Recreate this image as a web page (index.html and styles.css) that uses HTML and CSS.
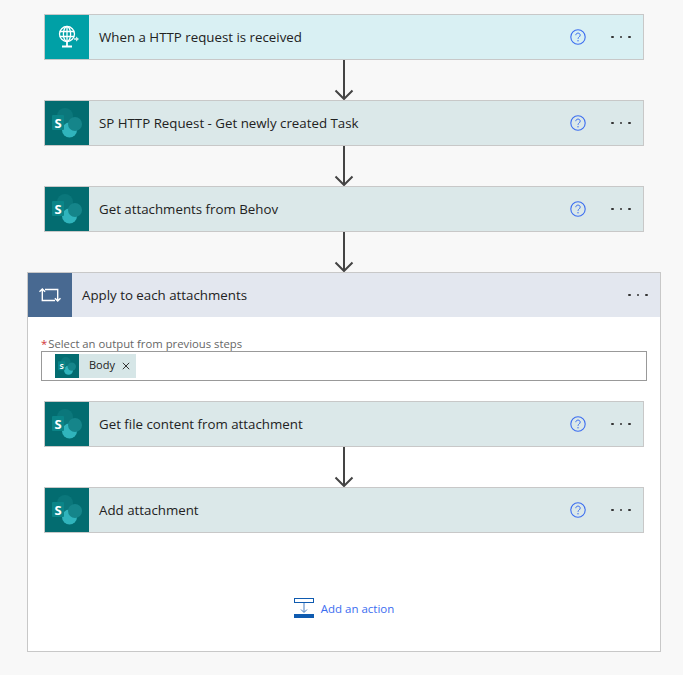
FILE: index.html
```html
<!DOCTYPE html>
<html lang="en">
<head>
  <meta charset="UTF-8">
  <title>Flow designer</title>
  <link rel="stylesheet" href="styles.css">
</head>
<body>
  <svg class="defs">
    <symbol id="sp" viewBox="0 0 30 30">
      <circle cx="13" cy="8" r="8" fill="#0b777b"/>
      <circle cx="17.500" cy="22" r="7.500" fill="#30b4bc"/>
      <circle cx="23" cy="16" r="7" fill="#15858a"/>
      <rect x="0" y="7" width="12" height="15" rx="1" fill="#0b8588"/>
      <text x="6" y="19.500" class="sp-letter">S</text>
    </symbol>
    <symbol id="help" viewBox="0 0 16 16">
      <circle cx="8" cy="8" r="7.200" fill="none" stroke="#3b6df0" stroke-width="1.100"/>
      <path d="M5.800 6.200c0-1.300 1-2.100 2.200-2.100s2.200.8 2.200 2c0 1.900-2.200 1.900-2.200 3.700" fill="none" stroke="#3b6df0" stroke-width="1"/>
      <circle cx="8" cy="11.700" r=".7" fill="#3b6df0"/>
    </symbol>
    <symbol id="down" viewBox="0 0 20 40">
      <path d="M10 0v39M1.500 30.500l8.500 8.500 8.500-8.500" fill="none" stroke="#444" stroke-width="2"/>
    </symbol>
  </svg>

  <main class="flow">
    <div class="card card-http">
      <div class="card-icon">
        <svg width="24" height="26" viewBox="0 0 24 26" fill="none" stroke="#fff" stroke-width="1.300">
          <circle cx="12" cy="10" r="7.500"/>
          <ellipse cx="12" cy="10" rx="3.600" ry="7.500"/>
          <path d="M4.800 7.500h14.400M4.800 12.500h14.400M12 2.500v15"/>
          <path d="M12 18v4M7 22.500h10" stroke-width="1.800"/>
          <path d="M19 15h2.500" stroke="#cfeced" stroke-width="1.600"/>
          <path d="M21 12.500l3 2.500-3 2.500z" fill="#cfeced" stroke="none"/>
        </svg>
      </div>
      <span class="card-title">When a HTTP request is received</span>
      <svg class="help"><use href="#help"/></svg>
      <span class="dots"><i></i><i></i><i></i></span>
    </div>

    <div class="arrow"><svg class="arrow-svg"><use href="#down"/></svg></div>

    <div class="card card-sp">
      <div class="card-icon"><svg class="sp-icon"><use href="#sp"/></svg></div>
      <span class="card-title">SP HTTP Request - Get newly created Task</span>
      <svg class="help"><use href="#help"/></svg>
      <span class="dots"><i></i><i></i><i></i></span>
    </div>

    <div class="arrow"><svg class="arrow-svg"><use href="#down"/></svg></div>

    <div class="card card-sp">
      <div class="card-icon"><svg class="sp-icon"><use href="#sp"/></svg></div>
      <span class="card-title">Get attachments from Behov</span>
      <svg class="help"><use href="#help"/></svg>
      <span class="dots"><i></i><i></i><i></i></span>
    </div>

    <div class="arrow"><svg class="arrow-svg"><use href="#down"/></svg></div>

    <section class="loop">
      <div class="loop-head">
        <div class="loop-icon">
          <svg width="22" height="14" viewBox="0 0 22 14" fill="none" stroke="#fff" stroke-width="1.400">
            <path d="M3.300 1v11.500H16M.5 3.800l2.800-2.800 2.800 2.800"/>
            <path d="M18.700 13V1.500H6M15.900 10.200l2.800 2.800 2.800-2.800"/>
          </svg>
        </div>
        <span class="loop-title">Apply to each attachments</span>
        <span class="dots"><i></i><i></i><i></i></span>
      </div>

      <div class="loop-body">
        <label class="field-label"><span class="req">*</span>Select an output from previous steps</label>
        <div class="field">
          <span class="token">
            <span class="token-icon"><svg class="token-sp"><use href="#sp"/></svg></span>
            <span class="token-text">Body</span>
            <svg class="token-x" width="8" height="8" viewBox="0 0 8 8"><path d="M.8.8l6.400 6.400M7.200.8L.8 7.200" stroke="#333" stroke-width="1"/></svg>
          </span>
        </div>

        <div class="inner">
          <div class="card card-sp">
            <div class="card-icon"><svg class="sp-icon"><use href="#sp"/></svg></div>
            <span class="card-title">Get file content from attachment</span>
            <svg class="help"><use href="#help"/></svg>
            <span class="dots"><i></i><i></i><i></i></span>
          </div>

          <div class="arrow"><svg class="arrow-svg"><use href="#down"/></svg></div>

          <div class="card card-sp">
            <div class="card-icon"><svg class="sp-icon"><use href="#sp"/></svg></div>
            <span class="card-title">Add attachment</span>
            <svg class="help"><use href="#help"/></svg>
            <span class="dots"><i></i><i></i><i></i></span>
          </div>
        </div>

        <div class="add-action">
          <svg width="20" height="20" viewBox="0 0 20 20">
            <rect x=".5" y=".5" width="19" height="4" fill="none" stroke="#0f5bb0"/>
            <path d="M10 5v9M7 11.500l3 3 3-3" fill="none" stroke="#4a7fc0"/>
            <rect y="16" width="20" height="4" fill="#0f5bb0"/>
          </svg>
          <span>Add an action</span>
        </div>
      </div>
    </section>
  </main>
</body>
</html>
```

FILE: styles.css
```css
html, body {
  margin: 0;
  padding: 0;
}

body {
  background-color: #f8f8f8;
  font-family: "Open Sans", "Noto Sans", sans-serif;
  color: #222;
}

.defs {
  display: none;
}

.sp-letter {
  font-family: "Open Sans", sans-serif;
  font-size: 13px;
  font-weight: 700;
  fill: #fff;
  text-anchor: middle;
}

.flow {
  width: 634px;
  margin-left: 27px;
  padding-top: 14px;
  display: flex;
  flex-direction: column;
  align-items: center;
}

.card {
  width: 600px;
  height: 46px;
  box-sizing: border-box;
  border: 1px solid #c8c8c8;
  display: flex;
  align-items: center;
  flex-shrink: 0;
}

.card-http {
  background-color: #d9f0f3;
}

.card-sp {
  background-color: #dbe8e9;
}

.card-icon {
  width: 44px;
  height: 44px;
  display: flex;
  align-items: center;
  justify-content: center;
  flex-shrink: 0;
}

.card-http .card-icon {
  background-color: #00a0a6;
}

.card-sp .card-icon {
  background-color: #036c70;
}

.sp-icon {
  width: 30px;
  height: 30px;
}

.card-title {
  flex: 1;
  margin-left: 10px;
  font-size: 13.300px;
}

.help {
  width: 16px;
  height: 16px;
  margin-right: 25px;
}

.dots {
  width: 20px;
  margin-right: 12px;
  display: flex;
  justify-content: space-between;
}

.dots i {
  width: 2.600px;
  height: 2.600px;
  border-radius: 50%;
  background-color: #333;
}

.arrow {
  height: 40px;
  display: flex;
  justify-content: center;
}

.arrow-svg {
  width: 20px;
  height: 40px;
}

.loop {
  width: 634px;
  height: 380px;
  box-sizing: border-box;
  border: 1px solid #c8c8c8;
  background-color: #fff;
  flex-shrink: 0;
}

.loop-head {
  height: 44px;
  background-color: #e3e7ef;
  display: flex;
  align-items: center;
}

.loop-icon {
  width: 44px;
  height: 44px;
  background-color: #486991;
  display: flex;
  align-items: center;
  justify-content: center;
}

.loop-title {
  flex: 1;
  margin-left: 10px;
  font-size: 13.300px;
}

.loop-body {
  padding: 20px 13px 0;
}

.field-label {
  display: block;
  font-size: 11.300px;
  line-height: 14px;
  color: #666;
}

.req {
  color: #d13438;
  margin-right: 1px;
}

.field {
  height: 30px;
  box-sizing: border-box;
  border: 1px solid #999;
  background-color: #fff;
  padding-left: 13px;
  display: flex;
  align-items: center;
}

.token {
  height: 24px;
  display: flex;
  align-items: center;
  background-color: #d6e6e7;
  font-size: 11px;
  line-height: 22px;
}

.token-icon {
  width: 24px;
  height: 24px;
  background-color: #036c70;
  display: flex;
  align-items: center;
  justify-content: center;
}

.token-sp {
  width: 18px;
  height: 18px;
}

.token-text {
  margin-left: 10px;
  padding-bottom: 2px;
}

.token-x {
  margin: 0 6px 0 7px;
}

.inner {
  margin-top: 20px;
  margin-left: 3px;
  display: flex;
  flex-direction: column;
  align-items: center;
  width: 600px;
}

.add-action {
  margin-top: 65px;
  display: flex;
  align-items: center;
  justify-content: center;
  gap: 7px;
  font-size: 11.500px;
  color: #3b6df0;
}
```
